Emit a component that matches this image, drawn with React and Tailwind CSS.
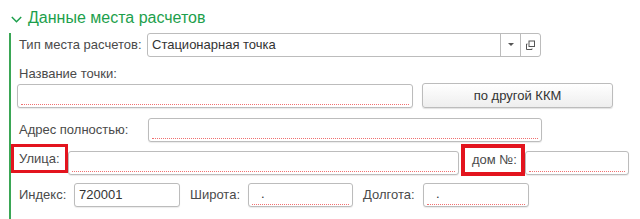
import React from 'react';

const font = { fontFamily: '"Liberation Sans", Arial, sans-serif' };

const Field = ({ className = '', value, required = false }) => (
  <div
    className={`flex h-[24px] flex-col rounded-[3px] border border-[#bcbcbc] bg-white shadow-[0_1px_1px_rgba(0,0,0,0.08)] ${className}`}
  >
    <div className="flex h-full items-center px-[4px] text-[13px] text-[#333]">{value}</div>
    {required && <div className="mx-[3px] mb-[2px] border-b border-dotted border-[#f07070]" />}
  </div>
);

const Label = ({ children, className = '' }) => (
  <span className={`text-[13px] leading-[16px] text-[#4a4a4a] ${className}`}>{children}</span>
);

const App = () => {
  return (
    <div className="h-[219px] w-[640px] overflow-hidden bg-white" style={font}>
      {/* Заголовок группы */}
      <div className="flex h-[33px] items-start pt-[9px]">
        <svg className="ml-[11px] mt-[7px] h-[7px] w-[11px]" viewBox="0 0 11 7">
          <path d="M0.8 1 L5.5 5.7 L10.2 1" fill="none" stroke="#1d9f4c" strokeWidth="1.5" />
        </svg>
        <span className="ml-[6px] text-[16px] leading-[18px] text-[#1d9f4c]">Данные места расчетов</span>
      </div>

      <div className="ml-[9px] flex h-[186px] flex-col border-l-2 border-[#3aa655]">
        {/* Тип места */}
        <div className="flex h-[24px] items-center">
          <Label className="ml-[8px] w-[128px]">Тип места расчетов:</Label>
          <div className="flex h-[24px] w-[394px] items-stretch rounded-[3px] border border-[#bcbcbc] bg-white">
            <div className="flex flex-1 items-center px-[4px] text-[13px] text-[#333]">Стационарная точка</div>
            <div className="flex w-[20px] items-center justify-center border-l border-[#bcbcbc]">
              <svg width="6" height="4" viewBox="0 0 6 4"><path d="M0 0 H6 L3 3 Z" fill="#555" /></svg>
            </div>
            <div className="flex w-[20px] items-center justify-center border-l border-[#bcbcbc]">
              <svg width="11" height="11" viewBox="0 0 11 11">
                <rect x="4" y="1" width="5.5" height="5.5" fill="none" stroke="#555" strokeWidth="1" />
                <path d="M2.5 4 H1.5 V9.5 H7 V8.5" fill="none" stroke="#555" strokeWidth="1" />
              </svg>
            </div>
          </div>
        </div>

        {/* Название точки */}
        <Label className="ml-[8px] mt-[9px]">Название точки:</Label>
        <div className="mt-[1px] flex items-end">
          <Field className="ml-[6px] w-[396px]" required />
          <button className="ml-[9px] h-[25px] w-[191px] rounded-[3px] border border-[#bcbcbc] bg-gradient-to-b from-white to-[#eeeeee] text-[13px] text-[#333] shadow-[0_1px_1px_rgba(0,0,0,0.12)]">
            по другой ККМ
          </button>
        </div>

        {/* Адрес */}
        <div className="mt-[10px] flex items-center">
          <Label className="ml-[8px] w-[129px]">Адрес полностью:</Label>
          <Field className="w-[394px]" required />
        </div>

        {/* Улица / дом */}
        <div className="mt-[2px] flex h-[32px] items-end">
          <div className="mb-[3px] flex h-[29px] w-[57px] items-center border-[3px] border-[#e3141e] pl-[5px]">
            <Label>Улица:</Label>
          </div>
          <Field className="mb-[1px] w-[391px]" required />
          <div className="ml-[2px] flex h-[32px] w-[64px] items-center border-[4px] border-[#e3141e] pl-[7px]">
            <Label>дом №:</Label>
          </div>
          <Field className="mb-[1px] w-[104px]" required />
        </div>

        {/* Индекс / широта / долгота */}
        <div className="mt-[7px] flex items-center">
          <Label className="ml-[8px] w-[55px]">Индекс:</Label>
          <Field className="w-[106px]" value="720001" />
          <Label className="ml-[10px] w-[58px]">Широта:</Label>
          <Field className="w-[105px]" value={<span className="ml-[8px]">.</span>} required />
          <Label className="ml-[10px] w-[60px]">Долгота:</Label>
          <Field className="w-[106px]" value={<span className="ml-[8px]">.</span>} required />
        </div>
      </div>
    </div>
  );
};

export default App;
